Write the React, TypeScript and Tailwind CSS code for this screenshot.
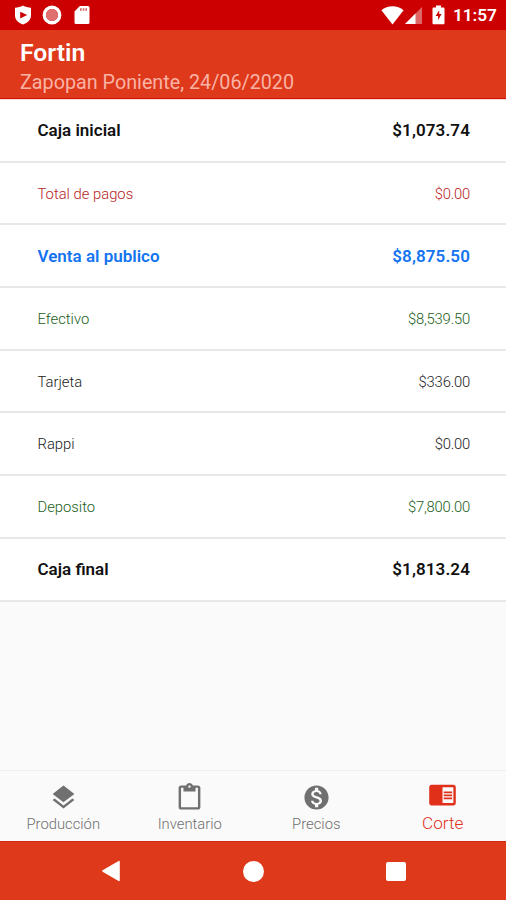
import {
  MdChromeReaderMode,
  MdContentPaste,
  MdLayers,
  MdMonetizationOn,
} from "react-icons/md";
import { IconType } from "react-icons";

interface RowProps {
  label: string;
  amount: string;
  color: string;
  bold?: boolean;
}

interface TabProps {
  label: string;
  icon: IconType;
  active?: boolean;
}

const rows: RowProps[] = [
  { label: "Caja inicial", amount: "$1,073.74", color: "text-[#111111]", bold: true },
  { label: "Total de pagos", amount: "$0.00", color: "text-[#b71c1c]" },
  { label: "Venta al publico", amount: "$8,875.50", color: "text-[#1474f0]", bold: true },
  { label: "Efectivo", amount: "$8,539.50", color: "text-[#1b5e20]" },
  { label: "Tarjeta", amount: "$336.00", color: "text-[#212121]" },
  { label: "Rappi", amount: "$0.00", color: "text-[#212121]" },
  { label: "Deposito", amount: "$7,800.00", color: "text-[#1b5e20]" },
  { label: "Caja final", amount: "$1,813.24", color: "text-[#111111]", bold: true },
];

const tabs: TabProps[] = [
  { label: "Producción", icon: MdLayers },
  { label: "Inventario", icon: MdContentPaste },
  { label: "Precios", icon: MdMonetizationOn },
  { label: "Corte", icon: MdChromeReaderMode, active: true },
];

function StatusBar() {
  return (
    <div className="flex h-[30px] shrink-0 items-center bg-[#cc0000] pr-[9px] pl-[14px] text-white">
      <svg className="h-5 w-[18px]" viewBox="0 0 18 20">
        <path d="M9 .6c2.400 1.500 5 2 8 2.200v7.400c0 4.600-3.200 7.400-8 9.300-4.800-1.900-8-4.700-8-9.300V2.800C4 2.600 6.600 2.100 9 .6z" fill="currentColor" />
        <path d="M6.200 6.700v6.800l7-3.400z" fill="#cc0000" />
      </svg>
      <svg className="ml-[10px] h-5 w-5" viewBox="0 0 20 20">
        <circle cx="10" cy="10" r="7.700" fill="none" stroke="currentColor" strokeWidth="3.400" />
        <circle cx="10" cy="10" r="6" fill="#e07070" />
      </svg>
      <svg className="ml-3 h-5 w-4" viewBox="0 0 16 20">
        <path d="M5.800 1H14a1.500 1.500 0 0 1 1.500 1.500v15A1.500 1.500 0 0 1 14 19H2a1.500 1.500 0 0 1-1.500-1.500V6.500z" fill="currentColor" />
        <path d="M6 3.200h1.600v2.600H6zM8.700 3.200h1.600v2.600H8.700zM11.400 3.200H13v2.600h-1.600z" fill="#d96060" />
      </svg>
      <svg className="ml-auto h-5 w-[23px]" viewBox="0 0 23 20">
        <path d="M11.500 19.500L.4 5.300C6.500-.1 16.500-.1 22.600 5.300z" fill="currentColor" />
      </svg>
      <svg className="h-5 w-[18px]" viewBox="0 0 18 20">
        <path d="M18 2v17H1z" fill="#e06666" />
        <path d="M11.500 8.500V19H1z" fill="currentColor" />
      </svg>
      <svg className="ml-[10px] h-5 w-[13px]" viewBox="0 0 13 20">
        <path d="M4 .6h5v2h2.200c.8 0 1.300.5 1.300 1.300v14c0 .8-.5 1.300-1.300 1.300H1.800c-.8 0-1.300-.5-1.300-1.300v-14c0-.8.5-1.300 1.300-1.300H4z" fill="currentColor" />
        <path d="M7.200 5.300L3.600 11h2.500v4l3.500-5.900H7.200z" fill="#cc0000" />
      </svg>
      <span className="ml-2 w-11 pt-[2px] text-[17.300px] leading-none font-semibold tracking-[-0.1px]">11:57</span>
    </div>
  );
}

function Row(props: RowProps) {
  return (
    <li
      className={`flex flex-1 items-center justify-between border-b-2 border-[#e8e8e8] pt-[1.500px] pr-9 pl-[37.500px] ${props.color} ${
        props.bold ? "text-[17px] font-semibold" : "text-[14.800px] font-[350]"
      }`}
    >
      <span>{props.label}</span>
      <span className={props.bold ? "tracking-[0.1px]" : "tracking-[-0.2px]"}>{props.amount}</span>
    </li>
  );
}

function Tab(props: TabProps) {
  const Icon = props.icon;
  return (
    <button
      className={`flex flex-1 flex-col items-center ${
        props.active ? "pt-[9px] text-[#e0301a]" : "pt-[11.500px] text-[#707070]"
      }`}
    >
      <Icon size={29} />
      <span
        className={
          props.active
            ? "pt-[2px] text-[17.200px] leading-6 font-[350]"
            : "text-[14.800px] leading-[25px] font-[350]"
        }
      >
        {props.label}
      </span>
    </button>
  );
}

export default function App() {
  return (
    <div className="flex h-[900px] w-[506px] flex-col overflow-hidden bg-[#fafafa] font-['Roboto',sans-serif]">
      <StatusBar />
      <header className="h-[69px] shrink-0 border-b border-[#d80c08] bg-[#df391b] pt-2 pl-5">
        <h1 className="text-[24.700px] leading-[30px] font-semibold text-white">Fortin</h1>
        <p className="text-[19.750px] leading-[30px] text-[#f9b3a5]">Zapopan Poniente, 24/06/2020</p>
      </header>
      <ul className="flex h-[502.500px] shrink-0 flex-col border-t border-[#f3dedb] bg-white">
        {rows.map((row) => (
          <Row key={row.label} {...row} />
        ))}
      </ul>
      <nav className="mt-auto flex h-[71px] shrink-0 border-t border-[#eeeeee]">
        {tabs.map((tab) => (
          <Tab key={tab.label} {...tab} />
        ))}
      </nav>
      <div className="flex h-[59px] shrink-0 items-center border-t border-[#d0280f] bg-[#df391b] pl-[101px] text-white">
        <svg className="h-[22px] w-5" viewBox="0 0 20 22">
          <path d="M18 1.600v18.800L2 11z" fill="currentColor" stroke="currentColor" strokeWidth="1.600" strokeLinejoin="round" />
        </svg>
        <div className="ml-[122px] h-[21px] w-[21px] rounded-full bg-white" />
        <div className="ml-[122px] h-[19px] w-5 rounded-[2px] bg-white" />
      </div>
    </div>
  );
}
